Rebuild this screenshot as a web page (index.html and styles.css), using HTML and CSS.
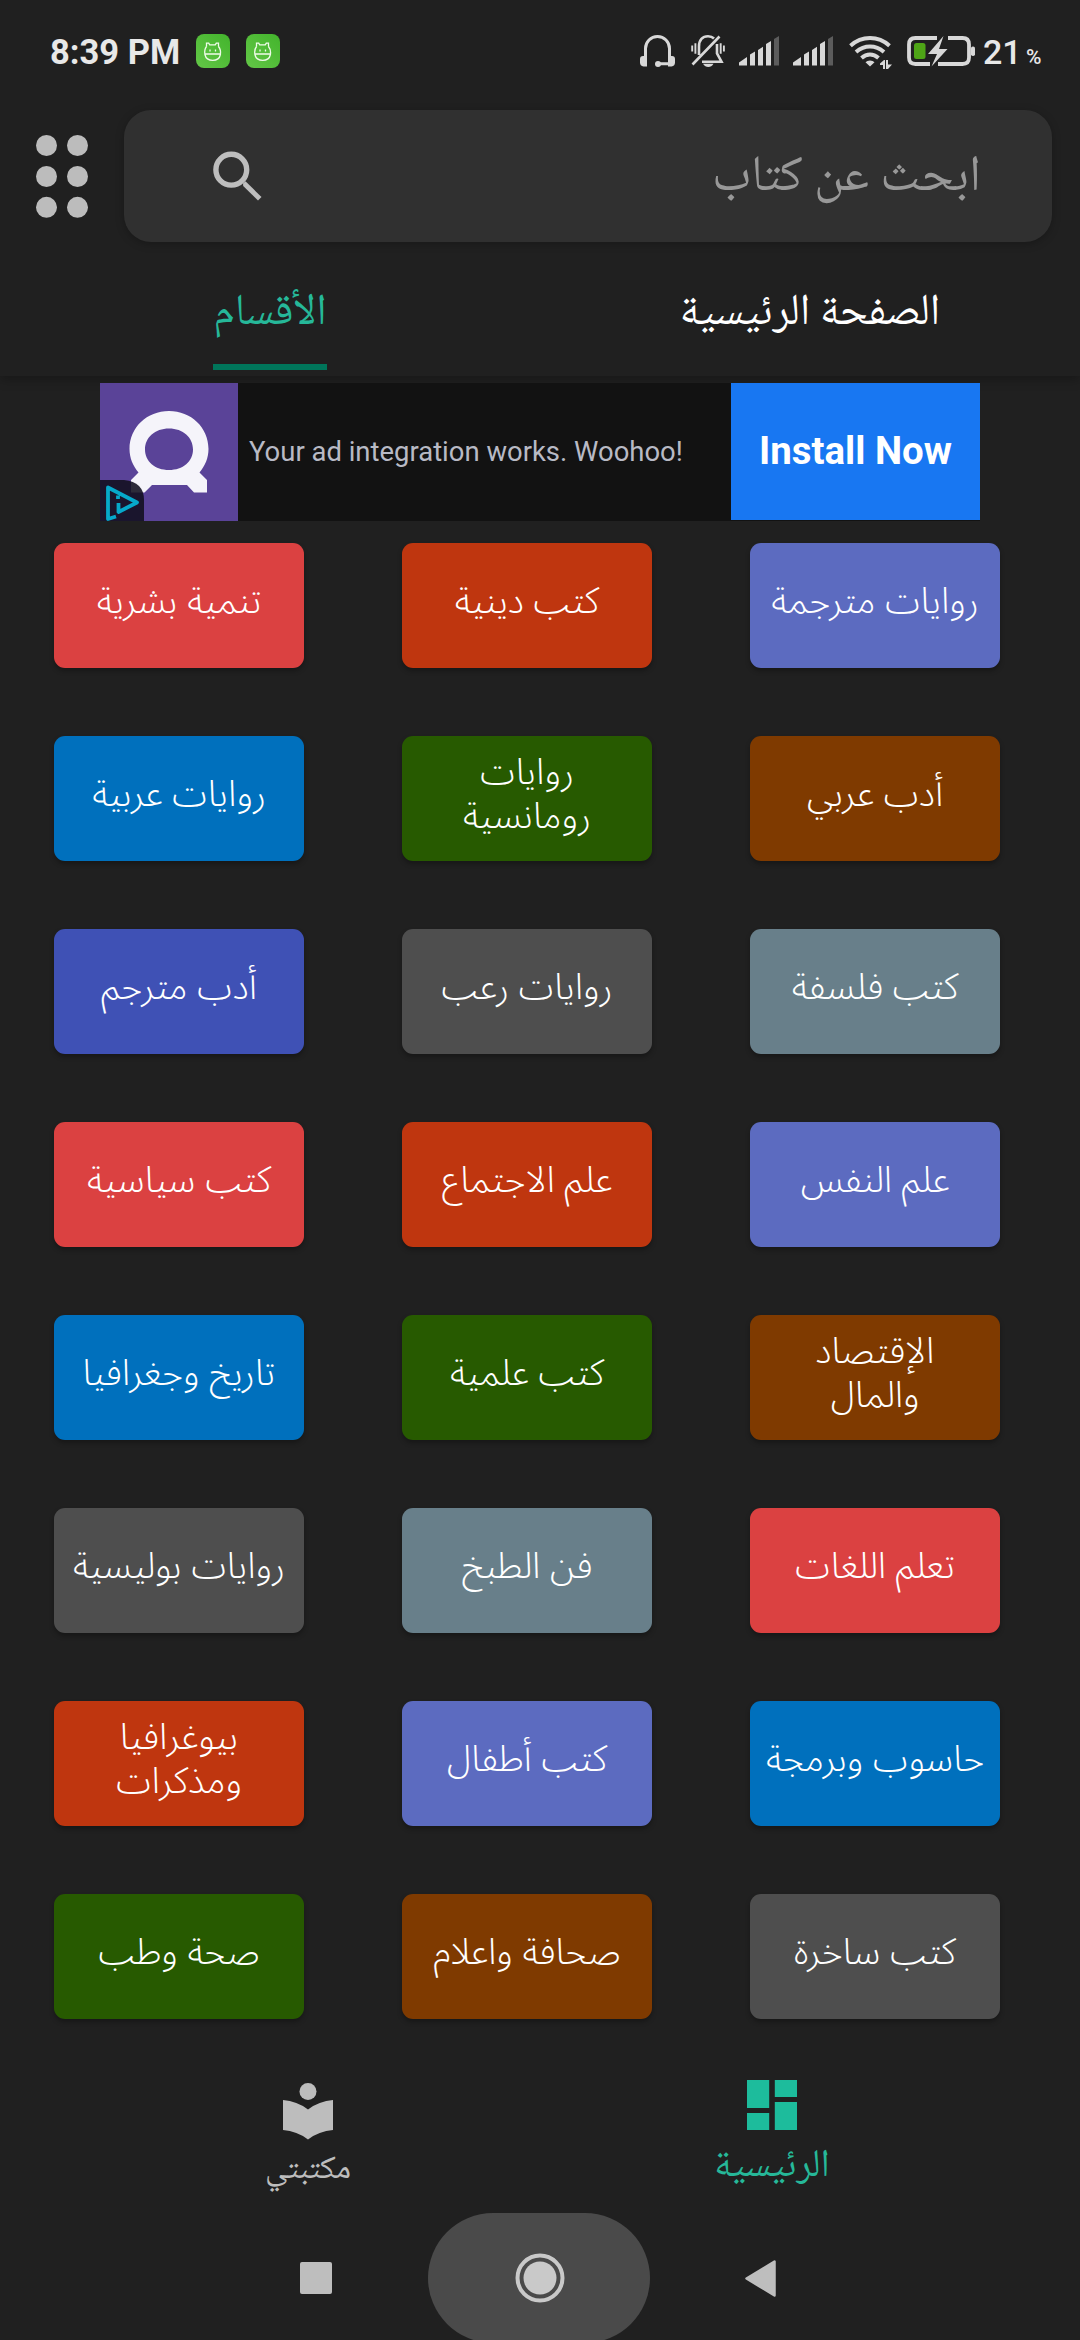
FILE: index.html
```html
<!DOCTYPE html>
<html lang="ar" dir="rtl">
<head>
<meta charset="utf-8">
<title>الأقسام</title>
<link rel="stylesheet" href="styles.css">
</head>
<body>
<div class="screen">
  <div class="status" dir="ltr">
    <span class="clock">8:39 PM</span>
    <svg class="app" width="34" height="34" viewBox="0 0 34 34"><defs><linearGradient id="g" x1="0" y1="1" x2="1" y2="0"><stop offset="0" stop-color="#63c747"/><stop offset="1" stop-color="#43b42c"/></linearGradient></defs><rect width="34" height="34" rx="8" fill="url(#g)"/><path d="M10.5 12.5V9.2h2.2l1 1.6h5.6l1-1.6h2.2v3.3M9 20h15.500M10.500 12.500C8.500 15 8.500 18 8.900 20.500C9.800 24.500 13 26.300 16.700 26.300S23.600 24.500 24.400 20.500C24.800 18 24.500 15 22.500 12.500M14 15.400v2.200M19.500 15.400v2.200" fill="none" stroke="#effbe9" stroke-width="1.300"/></svg>
    <svg class="app second" width="34" height="34" viewBox="0 0 34 34"><rect width="34" height="34" rx="8" fill="url(#g)"/><path d="M10.5 12.5V9.2h2.2l1 1.6h5.6l1-1.6h2.2v3.3M9 20h15.500M10.500 12.500C8.500 15 8.500 18 8.900 20.500C9.800 24.500 13 26.300 16.700 26.300S23.600 24.500 24.400 20.500C24.800 18 24.500 15 22.500 12.500M14 15.400v2.200M19.500 15.400v2.200" fill="none" stroke="#effbe9" stroke-width="1.300"/></svg>
    <div class="indicators">
      <svg width="35" height="33" viewBox="0 0 35 33"><path d="M5.500 24V13.500a12 12 0 0 1 24 0V24M18 28.800H30" fill="none" stroke="#d8d8d8" stroke-width="3"/><path d="M0 24q0-3 3-3h4v10.500H3.500Q0 31 0 27.500zM35 24q0-3-3-3h-4v10.500h3.500q3.500-.5 3.500-4z" fill="#d8d8d8"/><circle cx="18" cy="29" r="3" fill="#d8d8d8"/></svg>
      <svg class="bell" width="35" height="33" viewBox="0 0 35 33"><g fill="none" stroke="#d8d8d8" stroke-width="2.600"><path d="M8 20V11.500C8 5 11.500 1.300 17 1.300c2.600 0 4.600.8 6 2.200M26 9v9.500l4.500 8.200H11M1.500 29.500L28.500 1.500"/><path d="M1.200 10.500v6M4.400 8.300v10.500M29.700 8.300v10.500M32.900 10.500v6" stroke-width="1.900"/></g><path d="M12 28.800h10.500q-2 3.200-5.200 3.200T12 28.800z" fill="#d8d8d8"/></svg>
      <svg class="sig" width="40" height="30" viewBox="0 0 40 30"><path d="M0 29.500V26.500L8 21v8.500zM11 29.500V18.500l5-3v14zM19 29.500V14l5-3.300v18.800zM27 29.500V8l5-3v24.500z" fill="#d8d8d8"/><path d="M35 29.500V3l5-3v29.500z" fill="#5c5c5c"/></svg>
      <svg class="sig" width="40" height="30" viewBox="0 0 40 30"><path d="M0 29.500V26.500L8 21v8.500zM11 29.500V18.500l5-3v14zM19 29.500V14l5-3.300v18.800zM27 29.500V8l5-3v24.500z" fill="#d8d8d8"/><path d="M35 29.500V3l5-3v29.500z" fill="#5c5c5c"/></svg>
      <svg class="wifi" width="43" height="34" viewBox="0 0 43 34"><g fill="none" stroke="#d8d8d8" stroke-width="4"><path d="M1.500 9.700Q10 2 21 2T40.500 9.700M7 16q6.500-5.500 14-5.500T35 16M12.500 22q4-3.500 8.500-3.500t8.500 3.500"/></g><path d="M21 24.500q3 0 4.500 1.800L21 30.600l-4.500-4.300q1.500-1.800 4.500-1.800zM31 27.500l4-3.500h1v9h-2v-4h-3zM37 24h2v4.500h4L39 33h-2z" fill="#d8d8d8"/></svg>
      <svg class="battery" width="68" height="31" viewBox="0 0 68 31"><path d="M30 2H8.500Q2 2 2 8.500v13Q2 28 8.500 28H23M41 2h14.500Q62 2 62 8.500v13Q62 28 55.500 28H31" fill="none" stroke="#d8d8d8" stroke-width="3.800"/><rect x="7" y="7" width="11.500" height="16" rx="2.500" fill="#4ea516"/><path d="M36.500 0L21 18h9l-5.500 12.500L40.500 13H32z" fill="#d8d8d8"/><rect x="64" y="10.500" width="4" height="9.500" rx="1.800" fill="#d8d8d8"/></svg>
      <span class="pct">21</span><span class="sign">%</span>
    </div>
  </div>

  <header class="top">
    <div class="search">
      <span>ابحث عن كتاب</span>
      <svg width="50" height="50" viewBox="0 0 50 50"><circle cx="18.300" cy="18.700" r="15.400" fill="none" stroke="#bebebe" stroke-width="5.400"/><path d="M30 32.500l2.500-2.200L48.500 46 45 49.500 30.200 35z" fill="#bebebe" /></svg>
    </div>
    <svg class="dots" width="52" height="83" viewBox="0 0 52 83" fill="#bcbcbc"><circle cx="10.500" cy="10.500" r="10.500"/><circle cx="41.500" cy="10.500" r="10.500"/><circle cx="10.500" cy="41.500" r="10.500"/><circle cx="41.500" cy="41.500" r="10.500"/><circle cx="10.500" cy="72.300" r="10.500"/><circle cx="41.500" cy="72.300" r="10.500"/></svg>
  </header>

  <nav class="tabs">
    <div class="tab"><span>الصفحة الرئيسية</span></div>
    <div class="tab active"><span>الأقسام</span></div>
  </nav>

  <div class="ad" dir="ltr">
    <div class="logo">
      <svg width="138" height="138" viewBox="0 0 138 138"><path d="M69 28c22 0 39.500 16.500 39.500 38 0 9-3.500 17-9 23.500l7.500 7.500v12.500H94l-7-7.500H52l-7.500 7.500H31V97l7.500-7.500c-5.500-6.500-9-14.500-9-23.500 0-21.500 17.500-38 39.500-38zM69 45.500c-14 0-24 9-24 21s10 20.500 24 20.500 24-8.500 24-20.500-10-21-24-21z" fill="#f5f4fa" fill-rule="evenodd"/><path d="M0 97h24q20 2 20 20v21H0z" fill="#110f1e" opacity=".88"/><path d="M16 133.500L8 136V104.500L37 119.500 18.500 129V120M18 112.500v3.500" fill="none" stroke="#06a8cb" stroke-width="3.800" stroke-linejoin="round"/></svg>
    </div>
    <div class="copy">Your ad integration works. Woohoo!</div>
    <div class="cta">Install Now</div>
  </div>

  <main class="grid">
    <a class="c indigo">روايات مترجمة</a><a class="c orange">كتب دينية</a><a class="c red">تنمية بشرية</a>
    <a class="c brown">أدب عربي</a><a class="c green">روايات<br>رومانسية</a><a class="c blue">روايات عربية</a>
    <a class="c slate">كتب فلسفة</a><a class="c grey">روايات رعب</a><a class="c royal">أدب مترجم</a>
    <a class="c indigo">علم النفس</a><a class="c orange">علم الاجتماع</a><a class="c red">كتب سياسية</a>
    <a class="c brown">الإقتصاد<br>والمال</a><a class="c green">كتب علمية</a><a class="c blue">تاريخ وجغرافيا</a>
    <a class="c red">تعلم اللغات</a><a class="c slate">فن الطبخ</a><a class="c grey">روايات بوليسية</a>
    <a class="c blue">حاسوب وبرمجة</a><a class="c indigo">كتب أطفال</a><a class="c orange">بيوغرافيا<br>ومذكرات</a>
    <a class="c grey">كتب ساخرة</a><a class="c brown">صحافة واعلام</a><a class="c green">صحة وطب</a>
  </main>

  <nav class="bottom">
    <div class="item on">
      <svg width="50" height="50" viewBox="0 0 50 50" fill="#1dbc9c"><path d="M0 0h22.200v28H0zM27.800 0H50v17H27.800zM0 33h22.200v17H0zM27.800 22H50v28H27.800z"/></svg>
      <span>الرئيسية</span>
    </div>
    <div class="item">
      <svg width="50" height="57" viewBox="0 0 50 57" fill="#bdbdbd"><circle cx="25" cy="8.500" r="8.500"/><path d="M0 17Q14 18 25 26.500 36 18 50 17v30Q36 48 25 56.500 14 48 0 47z"/></svg>
      <span>مكتبتي</span>
    </div>
  </nav>

  <div class="system" dir="ltr">
    <svg class="square" width="32" height="32"><rect width="32" height="32" rx="2" fill="#bebebe"/></svg>
    <div class="home"><svg width="50" height="50" viewBox="0 0 50 50"><circle cx="25" cy="25" r="22.500" fill="none" stroke="#c9c9c9" stroke-width="4"/><circle cx="25" cy="25" r="16.500" fill="#c9c9c9"/></svg></div>
    <svg class="back" width="31" height="37" viewBox="0 0 31 37"><path d="M29.500 1.500v34L1.500 18.500z" fill="#bebebe" stroke="#bebebe" stroke-width="2.500" stroke-linejoin="round"/></svg>
  </div>
</div>
</body>
</html>
```
FILE: styles.css
```css
* { box-sizing: border-box; }
body { margin: 0; background: #202020; }
svg { display: block; flex: none; }
.screen { width: 1080px; height: 2340px; overflow: hidden; display: flex; flex-direction: column; background: #202020; color: #fff; font-family: "Noto Naskh Arabic", "DejaVu Sans", sans-serif; }

.status { height: 110px; flex: none; display: flex; align-items: flex-start; padding: 34px 37px 0 50px; font-family: Roboto, sans-serif; color: #e8e8e8; }
.clock { width: 130px; font-size: 34.500px; line-height: 36px; font-weight: 700; white-space: nowrap; }
.app { margin-left: 16px; }
.indicators { margin-left: auto; display: flex; align-items: flex-start; padding-top: 1px; }
.bell { margin-left: 16px; }
.sig { margin: 1px 0 0 13px; }
.sig + .sig { margin-left: 14px; }
.wifi { margin: 1px 0 0 16px; }
.battery { margin: 1px 0 0 15px; }
.pct { width: 43px; margin-left: 8px; font-size: 34px; line-height: 34px; font-weight: 500; }
.sign { width: 17px; font-size: 21px; line-height: 20px; margin-top: 12px; font-weight: 500; }

.top { height: 132px; flex: none; display: flex; align-items: center; padding: 0 28px 0 0; }
.search { width: 928px; height: 132px; border-radius: 27px; background: #303030; box-shadow: 0 2px 9px rgba(0,0,0,.25); display: flex; align-items: center; justify-content: space-between; padding: 0 71px 0 89px; font-size: 50.500px; line-height: 80px; color: #989898; }
.search span { padding-top: 5px; }
.dots { margin-right: 36px; }

.tabs { height: 134px; flex: none; display: flex; box-shadow: 0 4px 10px rgba(0,0,0,.25); clip-path: inset(0 0 -16px 0); }
.tab { width: 540px; display: flex; justify-content: center; font-size: 44px; line-height: 60px; padding-top: 43px; }
.tab span { height: 85px; border-bottom: 6px solid transparent; }
.active { color: #26b899; }
.active span { border-color: #00755a; }

.ad { width: 880px; height: 138px; flex: none; display: flex; align-self: center; margin: 7px 0 22px; background: #121212; font-family: Roboto, sans-serif; position: relative; }
.logo { width: 138px; background: #5a4398; }
.copy { flex: 1; padding-left: 11px; font-size: 27.450px; line-height: 138px; color: #b8bac5; white-space: nowrap; }
.cta { width: 249px; height: 137px; background: #1877f2; text-align: center; font-size: 38.400px; line-height: 136px; font-weight: 700; }

.grid { display: grid; flex: none; grid-template-columns: repeat(3, 250px); grid-auto-rows: 125px; gap: 68px 98px; padding: 0 80px 0 54px; height: 1509px; }
.c { display: flex; align-items: center; justify-content: center; text-align: center; border-radius: 11px; box-shadow: 0 3px 5px rgba(0,0,0,.3); font-family: "Noto Sans Arabic", "DejaVu Sans", sans-serif; font-size: 36.300px; line-height: 44px; font-weight: 300; white-space: nowrap; padding-bottom: 7px; }
.red { background: #db4141; }
.orange { background: #bf360f; }
.indigo { background: #5c6bc0; }
.blue { background: #0070bd; }
.green { background: #275a00; }
.brown { background: #7f3a00; }
.royal { background: #3f51b5; }
.grey { background: #4e4e4e; }
.slate { background: #687f8a; }

.bottom { height: 161px; flex: none; display: flex; justify-content: space-between; padding: 28px 184px 0 184px; }
.item { width: 248px; display: flex; flex-direction: column; align-items: center; font-size: 33px; line-height: 50px; color: #bdbdbd; padding-top: 3px; }
.item.on { font-size: 39px; color: #26b899; padding-top: 0; }
.item span { margin-top: 6px; }
.item.on span { margin-top: 13px; }

.system { height: 130px; flex: none; display: flex; align-items: center; padding-left: 300px; }
.home { width: 222px; height: 130px; margin-left: 96px; border-radius: 65px; background: #4a4a4a; display: flex; align-items: center; justify-content: center; padding-left: 2px; }
.back { margin-left: 95px; }
```
